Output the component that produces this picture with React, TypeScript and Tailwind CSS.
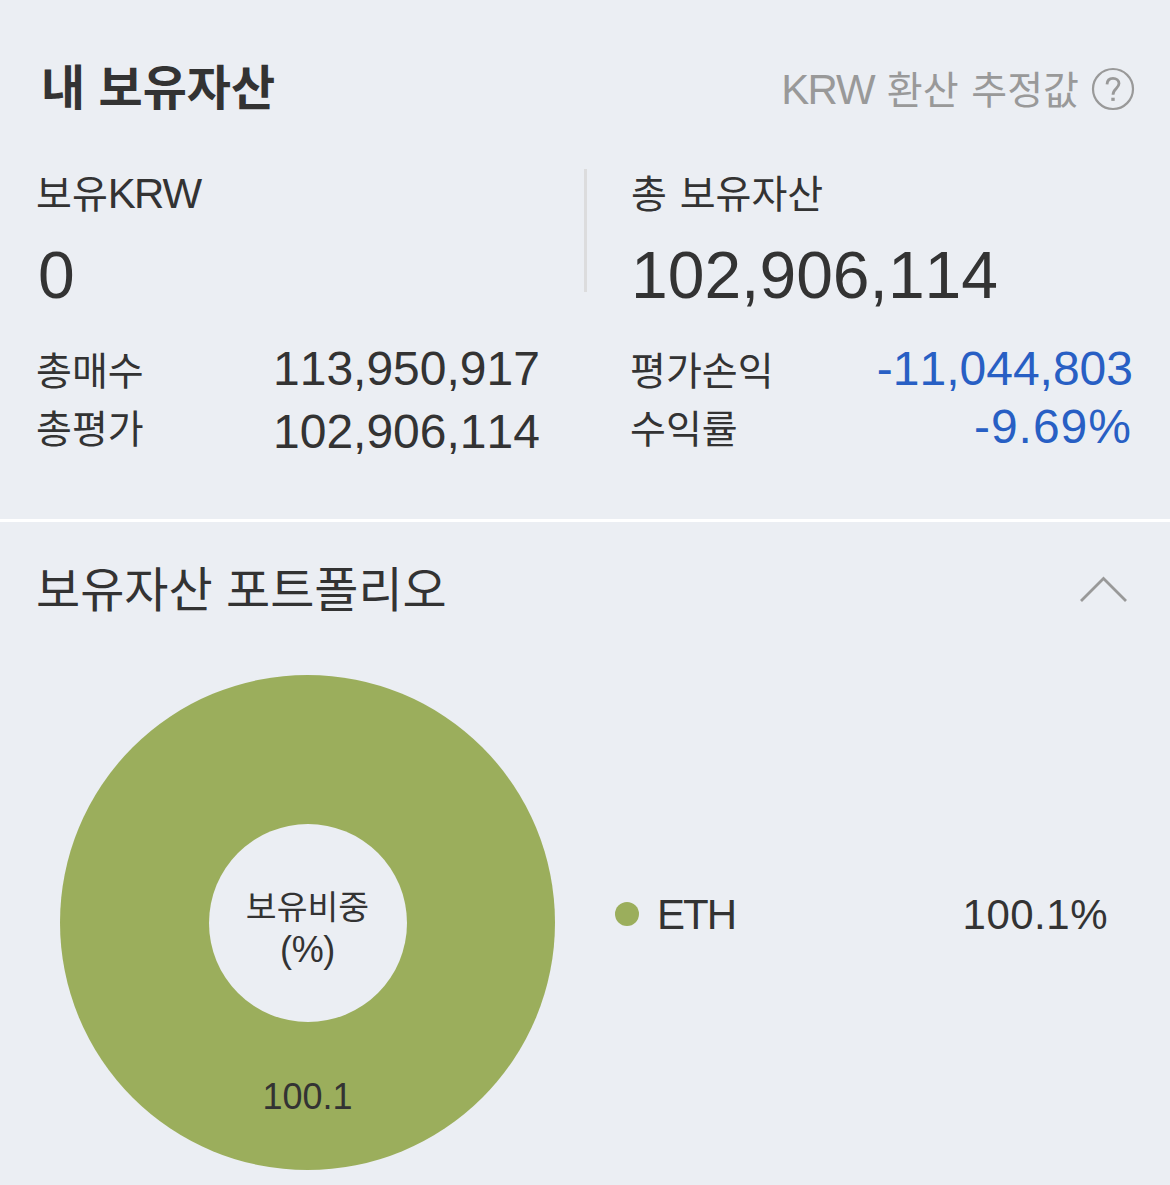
const HOLDINGS = [{ symbol: "ETH", share: "100.1" }];

// Latin letters run slightly larger and tighter than the Hangul next to them
function Latin({ children }: { children: string }) {
  return <span className="text-[42px] leading-none tracking-[-1.8px]">{children}</span>;
}

function HelpIcon() {
  return (
    <svg className="h-[44px] w-[44px]" viewBox="0 0 44 44" fill="none" stroke="#999">
      <circle cx="22" cy="22" r="20" strokeWidth="2.2" />
      <path d="M16 17.4c.2-4 2.6-6 6-6s6 2.2 6 5.2c0 4.800-6 5.2-6 11.2" strokeWidth="2.8" />
      <path d="M20.3 32.3h3.4" strokeWidth="3.2" />
    </svg>
  );
}

export default function App() {
  return (
    <main className="h-[1185px] w-[1170px] overflow-hidden bg-[#ebeef3] font-['Liberation_Sans','Noto_Sans_CJK_KR',sans-serif] text-[#333] [font-kerning:none]">
      <section className="h-[522px] border-b-[3px] border-white pt-[59px]">
        <header className="flex h-[60px] justify-between pr-[35px] pl-[41px]">
          <h1 className="text-[48px] leading-[60px] font-bold">내 보유자산</h1>
          <div className="flex">
            <p className="mt-[2px] text-[39px] leading-[60px] text-[#999] [word-spacing:2px]">
              <Latin>KRW</Latin> 환산 추정값
            </p>
            <div className="mt-[8px] ml-[12px]">
              <HelpIcon />
            </div>
          </div>
        </header>

        <div className="mt-[46px] flex">
          <div className="ml-[36px] w-[548px]">
            <p className="h-[60px] text-[39px] leading-[60px]">
              보유<Latin>KRW</Latin>
            </p>
            <p className="mt-[10px] ml-[2px] text-[66px] leading-[80px]">0</p>
          </div>
          <div className="mt-[4px] h-[123px] w-[3px] bg-[#dcdcdd]" />
          <div className="ml-[44px]">
            <p className="h-[60px] text-[39px] leading-[60px] [word-spacing:2px]">총 보유자산</p>
            <p className="mt-[10px] text-[66px] leading-[80px]">102,906,114</p>
          </div>
        </div>

        <div className="mt-[22px] flex">
          <div className="ml-[36px] flex w-[594px]">
            <div className="mt-[6px] w-[237px] text-[39px] leading-[58px]">
              <p>총매수</p>
              <p>총평가</p>
            </div>
            <div className="text-[48px] leading-[63px]">
              <p>113,950,917</p>
              <p>102,906,114</p>
            </div>
          </div>
          <div className="flex w-[503px] justify-between">
            <div className="mt-[6px] text-[39px] leading-[58px]">
              <p>평가손익</p>
              <p>수익률</p>
            </div>
            <div className="mt-[3px] text-right text-[48px] leading-[58px] text-[#285fc4]">
              <p>-11,044,803</p>
              <p className="mr-[1px] tracking-[1px]">-9.69%</p>
            </div>
          </div>
        </div>
      </section>

      <section>
        <header className="flex justify-between pt-[39px] pr-[41px] pl-[36px]">
          <h2 className="text-[48px] leading-[60px]">보유자산 포트폴리오</h2>
          <svg className="mt-[13px] h-[30px] w-[50px]" viewBox="0 0 50 30" fill="none" stroke="#999" strokeWidth="2.8">
            <path d="M2 27 24.5 4.5 47 27" />
          </svg>
        </header>

        <div className="mt-[54px] flex">
          <div className="ml-[60px] flex h-[495px] w-[495px] flex-col items-center rounded-full bg-[#9bae5c]">
            <div className="mt-[149px] flex h-[198px] w-[198px] flex-col items-center rounded-full bg-[#ebeef3] pt-[63px]">
              <p className="text-[33.5px] leading-[42px]">보유비중</p>
              <p className="text-[36px] leading-[42px] tracking-[-0.3px]">(%)</p>
            </div>
            <p className="mt-[53px] text-[36px] leading-[44px]">100.1</p>
          </div>
          <div className="mt-[210px] ml-[60px] w-[493px]">
            {HOLDINGS.map((h) => (
              <div key={h.symbol} className="flex h-[60px] items-center text-[42px] leading-[60px]">
                <span className="mt-[-2px] mr-[18px] h-[24px] w-[24px] rounded-full bg-[#9bae5c]" />
                <span className="tracking-[-2px]">{h.symbol}</span>
                <span className="ml-auto tracking-[0.5px]">{h.share}%</span>
              </div>
            ))}
          </div>
        </div>
      </section>
    </main>
  );
}
